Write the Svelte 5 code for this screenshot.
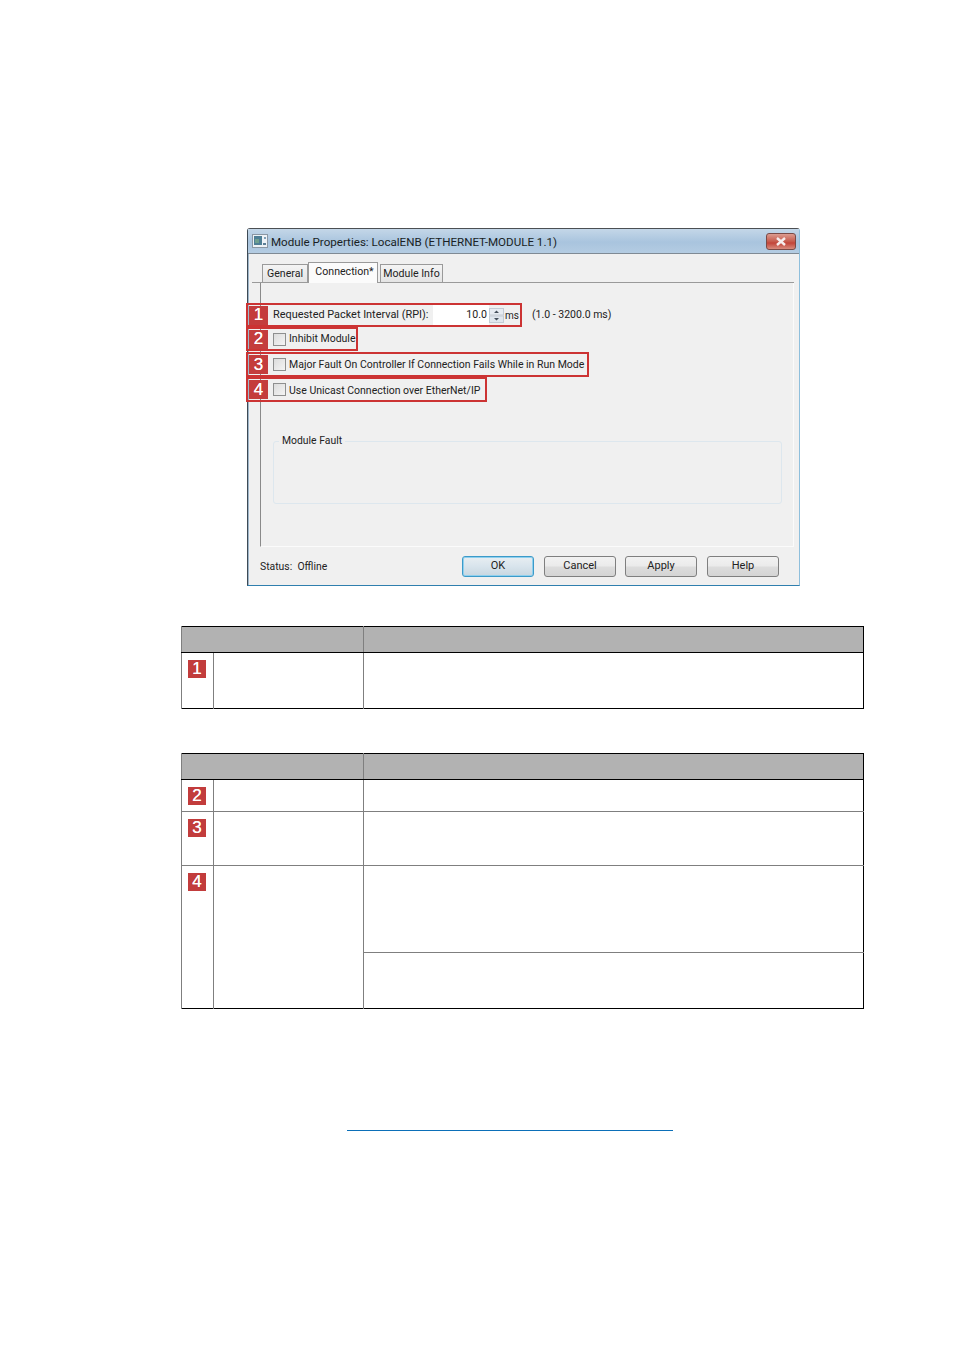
<script>
  const rows = [
    { n: 2, w: 112, h: 24, text: 'Inhibit Module', shift: 'up' },
    { n: 3, w: 343, h: 25, text: 'Major Fault On Controller If Connection Fails While in Run Mode', gap: true },
    { n: 4, w: 241, h: 25, text: 'Use Unicast Connection over EtherNet/IP', shift: 'down' }
  ];
  const buttons = ['OK', 'Cancel', 'Apply', 'Help'];
</script>

<main class="page">
  <section class="dialog">
    <header class="title">
      <svg class="appicon" width="16" height="14" viewBox="0 0 16 14">
        <rect x="0.5" y="0.5" width="15" height="13" fill="#eef2f6" stroke="#8b97a3" />
        <rect x="2" y="2" width="8" height="9" fill="#4f7f95" />
        <rect x="3" y="5" width="4" height="4" fill="#6f9f8f" />
        <rect x="12" y="3" width="2" height="2" fill="#7fa0b8" />
        <rect x="11" y="9" width="3" height="2" fill="#5d7f96" />
      </svg>
      <span class="titletext">Module Properties: LocalENB (ETHERNET-MODULE 1.1)</span>
      <span class="close">
        <svg width="12" height="9" viewBox="0 0 12 9"><path d="M2 1 L10 8 M10 1 L2 8" stroke="#f6eeee" stroke-width="2.4" /></svg>
      </span>
    </header>
    <div class="body">
      <nav class="tabs">
        <span class="tab">General</span>
        <span class="tab active">Connection*</span>
        <span class="tab last">Module Info</span>
      </nav>
      <div class="pane">
        <div class="row rpi">
          <span class="badge">1</span>
          <span class="label">Requested Packet Interval (RPI):</span>
          <span class="input">10.0</span>
          <span class="spin">
            <svg width="15" height="15" viewBox="0 0 15 15">
              <rect x="0.5" y="0.5" width="14" height="6.5" fill="#e6ecf2" stroke="#c3ccd5" />
              <rect x="0.5" y="8" width="14" height="6.5" fill="#dfe7ee" stroke="#c3ccd5" />
              <path d="M5 5 L7.5 2.5 L10 5 Z M5 10 L7.5 12.5 L10 10 Z" fill="#44505c" />
            </svg>
          </span>
          <span class="ms">ms</span>
        </div>
        <span class="range">(1.0 - 3200.0 ms)</span>
        {#each rows as r}
          <div class="row check" class:gap={r.gap} style="width:{r.w}px;height:{r.h}px">
            <span class="badge">{r.n}</span>
            <span class="box"></span>
            <span class="label" class:up={r.shift === 'up'} class:down={r.shift === 'down'}>{r.text}</span>
          </div>
        {/each}
        <fieldset class="fault">
          <legend>Module Fault</legend>
        </fieldset>
      </div>
      <footer class="foot">
        <span class="status">Status:&nbsp; Offline</span>
        <div class="buttons">
          {#each buttons as b, i}
            <span class="btn" class:default={i === 0}>{b}</span>
          {/each}
        </div>
      </footer>
    </div>
  </section>

  <table class="t1">
    <colgroup><col class="c1" /><col class="c2" /><col /></colgroup>
    <thead><tr><th colspan="2"></th><th></th></tr></thead>
    <tbody>
      <tr class="h56"><td><span class="mark">1</span></td><td></td><td></td></tr>
    </tbody>
  </table>

  <table class="t2">
    <colgroup><col class="c1" /><col class="c2" /><col /></colgroup>
    <thead><tr><th colspan="2"></th><th></th></tr></thead>
    <tbody>
      <tr class="h32"><td><span class="mark">2</span></td><td></td><td></td></tr>
      <tr class="h54"><td><span class="mark">3</span></td><td></td><td></td></tr>
      <tr class="h87"><td rowspan="2"><span class="mark">4</span></td><td rowspan="2"></td><td></td></tr>
      <tr class="h56"><td></td></tr>
    </tbody>
  </table>

  <div class="link"></div>
</main>

<style>
  :global(body) { margin: 0; background: #fff; }
  .page {
    width: 954px;
    height: 1350px;
    padding: 228px 0 0;
    box-sizing: border-box;
    position: relative;
    font-family: Roboto, "Liberation Sans", Arial, sans-serif;
    overflow: hidden;
  }
  .dialog {
    width: 553px;
    height: 358px;
    margin-left: 247px;
    box-sizing: border-box;
    border: 1px solid #3d4a55;
    border-top-color: #4b4f53;
    border-right-color: #8fbfdc;
    border-bottom-color: #2f7fae;
    border-radius: 3px 3px 0 0;
    background: #f0f0f0;
    display: flex;
    flex-direction: column;
  }
  .title {
    height: 25px;
    flex: none;
    display: flex;
    align-items: center;
    padding: 0 3px 0 4px;
    box-sizing: border-box;
    background: linear-gradient(#c4d7e8, #a9c4de 55%, #b4cce2);
    border-bottom: 1px solid #7f8a94;
  }
  .appicon { margin-right: 3px; }
  .titletext { font-size: 11.6px; color: #1a1f24; flex: 1; margin-top: 2px; }
  .close {
    width: 30px;
    height: 17px;
    display: flex;
    align-items: center;
    justify-content: center;
    border: 1px solid #7a4a46;
    border-radius: 3px;
    box-sizing: border-box;
    background: linear-gradient(#dc9c90, #c65a4c 50%, #c2453a 60%, #d88c7e);
  }
  .body {
    flex: 1;
    display: flex;
    flex-direction: column;
    padding: 0 5px 0 3px;
    border-left: 1px solid #9fb6ca;
    min-height: 0;
  }
  .tabs {
    height: 29px;
    flex: none;
    display: flex;
    align-items: flex-end;
    padding-left: 10px;
    box-sizing: border-box;
    border-bottom: 1px solid #9a9a9a;
    position: relative;
  }
  .tab {
    font-size: 10.6px;
    color: #222;
    height: 18px;
    line-height: 17px;
    text-align: center;
    width: 46px;
    box-sizing: border-box;
    border: 1px solid #9a9a9a;
    border-bottom: none;
    background: linear-gradient(#f4f4f4, #e4e4e4);
  }
  .tab.active {
    width: 70px;
    height: 21px;
    line-height: 17px;
    padding-left: 3px;
    background: #fbfbfb;
    margin-bottom: -1px;
    z-index: 1;
  }
  .tab.last { width: 63px; margin-left: 2px; }
  .pane {
    flex: 1;
    position: relative;
    margin-left: 8px;
    border-left: 1px solid #8a8a8a;
    border-bottom: 1px solid #fbfbfb;
    border-right: 1px solid #fbfbfb;
    padding-top: 20px;
    box-sizing: border-box;
    min-height: 0;
  }
  .row {
    display: flex;
    align-items: center;
    box-sizing: border-box;
    border: 2px solid #cc3333;
    margin-left: -15px;
    color: #222;
    font-size: 10.5px;
    padding-left: 1px;
  }
  .rpi { width: 276px; height: 24px; }
  .gap { margin-top: 1px; }
  .badge {
    width: 19px;
    height: 19px;
    flex: none;
    background: #c43c3c;
    color: #fff;
    font-family: "Liberation Sans", Arial, sans-serif;
    font-size: 17px;
    text-shadow: 0 0 0.6px #fff;
    display: flex;
    align-items: center;
    justify-content: center;
  }
  .label { white-space: nowrap; }
  .up { margin-bottom: 2px; }
  .down { margin-top: 2px; }
  .rpi .label { margin-left: 5px; margin-bottom: 2px; width: 160px; flex: none; font-size: 10.9px; }
  .input {
    width: 56px;
    height: 20px;
    line-height: 20px;
    background: #fff;
    text-align: right;
    box-sizing: border-box;
    padding-right: 2px;
    font-size: 10.6px;
    flex: none;
  }
  .spin { width: 15px; height: 17px; display: flex; align-items: center; justify-content: center; flex: none; }
  .ms { margin-left: 1px; font-size: 10px; }
  .range {
    position: absolute;
    left: 271px;
    top: 25px;
    font-size: 10.5px;
    color: #222;
  }
  .box {
    width: 13px;
    height: 13px;
    margin: 0 3px 0 5px;
    flex: none;
    box-sizing: border-box;
    border: 1px solid #8e8f8f;
    background: linear-gradient(135deg, #dcdcdc, #f4f4f4);
  }
  .fault {
    position: absolute;
    left: 12px;
    top: 151px;
    width: 509px;
    height: 70px;
    box-sizing: border-box;
    margin: 0;
    padding: 0 5px;
    border: 1px solid #dde7ee;
    border-radius: 3px;
  }
  .fault legend {
    font-size: 10.4px;
    color: #222;
    padding: 0 3px;
    line-height: 14px;
  }
  .foot {
    height: 38px;
    flex: none;
    display: flex;
    align-items: center;
    padding-left: 8px;
    box-sizing: border-box;
  }
  .status { font-size: 10.4px; color: #222; flex: 1; }
  .buttons { display: flex; gap: 10px; padding-right: 15px; }
  .btn {
    width: 72px;
    height: 21px;
    line-height: 18px;
    text-align: center;
    font-size: 11px;
    color: #222;
    box-sizing: border-box;
    border: 1px solid #7f7f7f;
    border-radius: 3px;
    background: linear-gradient(#f2f2f2 0%, #ebebeb 45%, #dcdcdc 55%, #d4d4d4 100%);
  }
  .btn:nth-child(2) { margin-right: -1px; }
  .btn.default {
    border: 1px solid #3c9ac9;
    box-shadow: inset 0 0 0 1px #8fd0ee;
    background: linear-gradient(#e8eef2, #d8e4ec 50%, #c8d6e0);
  }

  table {
    width: 683px;
    margin-left: 181px;
    border-collapse: collapse;
    table-layout: fixed;
    border: 1px solid #000;
    box-sizing: border-box;
  }
  .t1 { margin-top: 40px; }
  .t2 { margin-top: 44px; }
  .c1 { width: 32px; }
  .c2 { width: 150px; }
  thead tr { height: 26px; }
  th {
    background: #b2b2b2;
    padding: 0;
    border-left: 1px solid #7f7f7f;
    border-bottom: 1px solid #000;
  }
  td {
    padding: 0;
    border-left: 1px solid #7f7f7f;
    border-top: 1px solid #7f7f7f;
    vertical-align: top;
  }
  tbody tr:first-child td { border-top: 1px solid #000; }
  .h32 { height: 32px; }
  .h54 { height: 54px; }
  .h56 { height: 56px; }
  .h87 { height: 87px; }
  .mark {
    display: block;
    width: 18px;
    height: 18px;
    margin: 7px 0 0 6px;
    background: #c23c3c;
    color: #fff;
    font-family: "Liberation Sans", Arial, sans-serif;
    font-size: 17px;
    text-shadow: 0 0 0.6px #fff;
    line-height: 18px;
    text-align: center;
  }
  .link {
    width: 326px;
    height: 1px;
    margin: 121px 0 0 347px;
    background: #0b6fb8;
  }
</style>
